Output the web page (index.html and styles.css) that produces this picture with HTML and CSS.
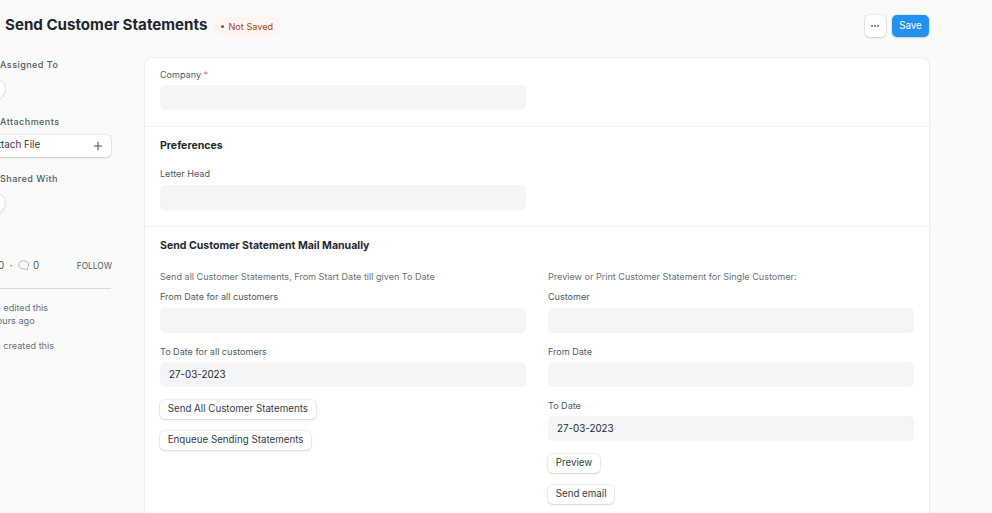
FILE: index.html
```html
<!DOCTYPE html>
<html lang="en">
<head>
<meta charset="utf-8">
<title>Send Customer Statements</title>
<link rel="stylesheet" href="styles.css">
</head>
<body>
<header class="page-head">
  <h1>Send Customer Statements</h1>
  <span class="indicator"><i></i>Not Saved</span>
  <div class="actions">
    <button class="btn menu-btn" aria-label="Menu"><svg width="10" height="4" viewBox="0 0 10 4"><path d="M1 1h2v2H1zM4 1h2v2H4zM7 1h2v2H7z" fill="#8b9095"/></svg></button>
    <button class="btn primary">Save</button>
  </div>
</header>
<main class="layout">
  <aside class="sidebar">
    <h2>Assigned To</h2>
    <div class="avatar"></div>
    <h2>Attachments</h2>
    <div class="attach"><span>Attach File</span><svg width="10" height="10" viewBox="0 0 10 10"><path d="M5 .8v8.4M.8 5h8.4" stroke="#505a62" stroke-width="1.1"/></svg></div>
    <h2>Shared With</h2>
    <div class="avatar"></div>
    <div class="stats">
      <span>0</span><span class="dot">·</span>
      <svg width="12" height="11" viewBox="0 0 12 11"><path d="M5.500.8C2.800.8.700 2.600.700 4.900S2.800 9 5.500 9h2.100l2 1.100V7.600c.8-.7 1.200-1.600 1.200-2.700C10.800 2.600 8.500.8 5.500.8z" fill="none" stroke="#b0b5bb"/></svg>
      <span class="count">0</span><span class="follow">FOLLOW</span>
    </div>
    <p class="log"><b class="who">You</b> edited this<br><span class="when">10 hours ago</span></p>
    <p class="log"><b class="who">You</b> created this</p>
  </aside>
  <section class="card">
    <div class="section company">
      <div class="col"><label>Company <em>*</em></label><div class="input"></div></div>
    </div>
    <div class="section prefs">
      <h3>Preferences</h3>
      <div class="col"><label>Letter Head</label><div class="input"></div></div>
    </div>
    <div class="section manual">
      <h3>Send Customer Statement Mail Manually</h3>
      <div class="cols">
        <div class="col">
          <p class="help">Send all Customer Statements, From Start Date till given To Date</p>
          <label>From Date for all customers</label><div class="input"></div>
          <label>To Date for all customers</label><div class="input">27-03-2023</div>
          <button class="btn">Send All Customer Statements</button>
          <button class="btn">Enqueue Sending Statements</button>
        </div>
        <div class="col">
          <p class="help">Preview or Print Customer Statement for Single Customer:</p>
          <label>Customer</label><div class="input"></div>
          <label>From Date</label><div class="input"></div>
          <label>To Date</label><div class="input">27-03-2023</div>
          <button class="btn">Preview</button>
          <button class="btn">Send email</button>
        </div>
      </div>
    </div>
  </section>
</main>
</body>
</html>
```
FILE: styles.css
```css
* { box-sizing: border-box; margin: 0; }
html, body { height: 513px; overflow: hidden; }
body { background: #f9fafa; font-family: Inter, sans-serif; font-size: 9.8px; color: #1f272e; }
.page-head { display: flex; align-items: center; height: 50px; padding: 2px 63px 0 5px; }
h1 { font-size: 15.12px; font-weight: 700; line-height: 20px; margin-top: -3px; white-space: nowrap; }
.indicator { display: flex; align-items: center; height: 18px; margin-left: 7px; padding: 0 8px 0 7px; border-radius: 6px; background: #fff5f0; color: #9c4621; font-size: 9.08px; letter-spacing: .05px; }
.indicator i { width: 3px; height: 3px; border-radius: 50%; background: #9c4621; margin-right: 4px; }
.actions { display: flex; gap: 6px; margin-left: auto; }
.btn { display: block; height: 19px; padding: 0 7.7px 1px; border: 0; border-radius: 5px; background: #fff; color: #333c44; font: 9.75px/18px Inter, sans-serif; box-shadow: 0 0 1px 1px rgba(25,39,52,.08), 0 1px 2px rgba(25,39,52,.12); white-space: nowrap; }
.actions .btn { height: 22px; }
.actions .menu-btn { width: 21px; padding: 0 1px 0 0; display: flex; align-items: center; justify-content: center; }
.actions .primary { width: 37px; padding: 0; background: #2490ef; color: #fff; }
.layout { display: flex; height: 463px; padding-top: 8px; }
.sidebar { width: 112px; overflow: hidden; flex: none; margin-right: 33px; }
.sidebar h2 { font-size: 9px; line-height: 14px; font-weight: 500; letter-spacing: .47px; color: #505a62; white-space: nowrap; }
.avatar { width: 22px; height: 22px; margin: 6px 0 15px -16px; border-radius: 50%; background: #fff; border: 1px solid #dfe2e4; box-shadow: 0 1px 1px rgba(25,39,52,.08); }
.attach { display: flex; align-items: center; justify-content: space-between; height: 22px; margin: 6px 1px 15px -20px; padding: 0 8px 0 11.5px; border-radius: 5px; background: #fff; box-shadow: 0 0 1px 1px rgba(25,39,52,.08), 0 1px 2px rgba(25,39,52,.12); color: #333c44; }
.attach span { margin-top: -4px; }
.stats { display: flex; align-items: center; height: 42px; margin: 33px 1px 12px -2px; padding-bottom: 4px; border-bottom: 1px solid #d9dcde; color: #505a62; }
.dot { margin: 0 5.5px; }
.count { margin-left: 3px; }
.follow { margin: 0 -1px 0 auto; font-size: 8.4px; }
.log { height: 38px; margin-left: -15.5px; font-size: 9.1px; line-height: 13px; color: #687178; white-space: nowrap; }
.who { color: #b5e5f2; font-weight: 400; }
.when { margin-left: -5px; }
.card { width: 784px; background: #fff; border-radius: 7px 7px 0 0; box-shadow: 0 0 1px 1px rgba(25,39,52,.06); }
.section { padding: 0 15px; border-bottom: 1px solid #f0f2f4; }
.company { height: 69px; padding-top: 10px; }
.prefs { height: 100px; padding-top: 11px; }
.manual { padding-top: 11px; border: 0; }
h3 { font-size: 10.55px; font-weight: 700; line-height: 16px; }
.cols { display: flex; gap: 22px; }
.col { width: 366px; }
.prefs .col { margin-top: 13px; }
.cols .col { margin-top: 16.2px; }
label { display: block; font-size: 9.05px; line-height: 14px; color: #505a62; }
label em { color: #ff5858; font-style: normal; }
.input { height: 25px; margin-top: 3px; padding-left: 9px; border-radius: 5px; background: #f4f5f6; line-height: 25px; color: #1f272e; }
.prefs .input { margin-top: 4px; }
.help { height: 20px; font-size: 9.07px; line-height: 14px; color: #687178; white-space: nowrap; }
.cols .input { margin: 3.4px 0 12px; }
.cols .btn { margin-bottom: 12px; }
.cols .input + .btn { margin-top: 12.7px; }
```
